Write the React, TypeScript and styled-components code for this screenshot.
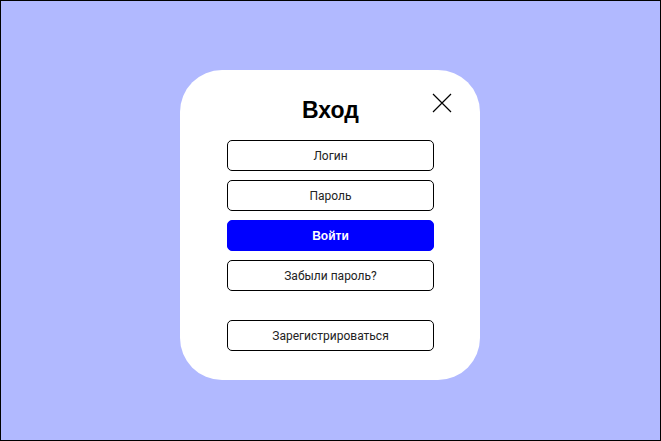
import React from "react";
import styled, { createGlobalStyle } from "styled-components";

const GlobalStyle = createGlobalStyle`
  html, body {
    margin: 0;
    padding: 0;
  }
  * {
    box-sizing: border-box;
  }
`;

const Screen = styled.div`
  width: 661px;
  height: 441px;
  border: 1px solid #000;
  background: #b1b9ff;
  display: flex;
  justify-content: flex-start;
  align-items: flex-start;
  padding: 69px 0 0 179px;
`;

const Card = styled.div`
  position: relative;
  width: 300px;
  height: 310px;
  background: #fff;
  border-radius: 42px;
  padding: 25px 46px 0 47px;
  display: flex;
  flex-direction: column;
`;

const Title = styled.h1`
  margin: 0 0 15px;
  height: 30px;
  line-height: 30px;
  text-align: center;
  font-family: "Liberation Sans", Arial, sans-serif;
  font-size: 23px;
  font-weight: 700;
  color: #000;
`;

const CloseButton = styled.button`
  position: absolute;
  top: 22px;
  right: 27px;
  width: 22px;
  height: 22px;
  padding: 0;
  border: none;
  background: transparent;
  cursor: pointer;
  display: flex;
  align-items: center;
  justify-content: center;
`;

const ButtonList = styled.div`
  display: flex;
  flex-direction: column;
  gap: 9px;
`;

const Field = styled.button<{ $primary?: boolean; $spaced?: boolean }>`
  width: 207px;
  height: 31px;
  margin-top: ${(p) => (p.$spaced ? "20px" : "0")};
  border: 1px solid ${(p) => (p.$primary ? "#0000ff" : "#000")};
  border-radius: 5px;
  background: ${(p) => (p.$primary ? "#0000ff" : "#fff")};
  color: ${(p) => (p.$primary ? "#fff" : "#222")};
  font-family: ${(p) =>
    p.$primary ? `"Liberation Sans", Arial, sans-serif` : `Roboto, Arial, sans-serif`};
  font-size: 12px;
  font-weight: ${(p) => (p.$primary ? 700 : 400)};
  padding: 0;
  cursor: pointer;
`;

const CloseIcon = () => (
  <svg width="20" height="20" viewBox="0 0 20 20" fill="none">
    <path d="M1 1 L19 19 M19 1 L1 19" stroke="#000" strokeWidth="1.2" />
  </svg>
);

const App: React.FC = () => {
  return (
    <>
      <GlobalStyle />
      <Screen>
        <Card>
          <Title>Вход</Title>
          <CloseButton aria-label="Закрыть">
            <CloseIcon />
          </CloseButton>
          <ButtonList>
            <Field>Логин</Field>
            <Field>Пароль</Field>
            <Field $primary>Войти</Field>
            <Field>Забыли пароль?</Field>
            <Field $spaced>Зарегистрироваться</Field>
          </ButtonList>
        </Card>
      </Screen>
    </>
  );
};

export default App;
